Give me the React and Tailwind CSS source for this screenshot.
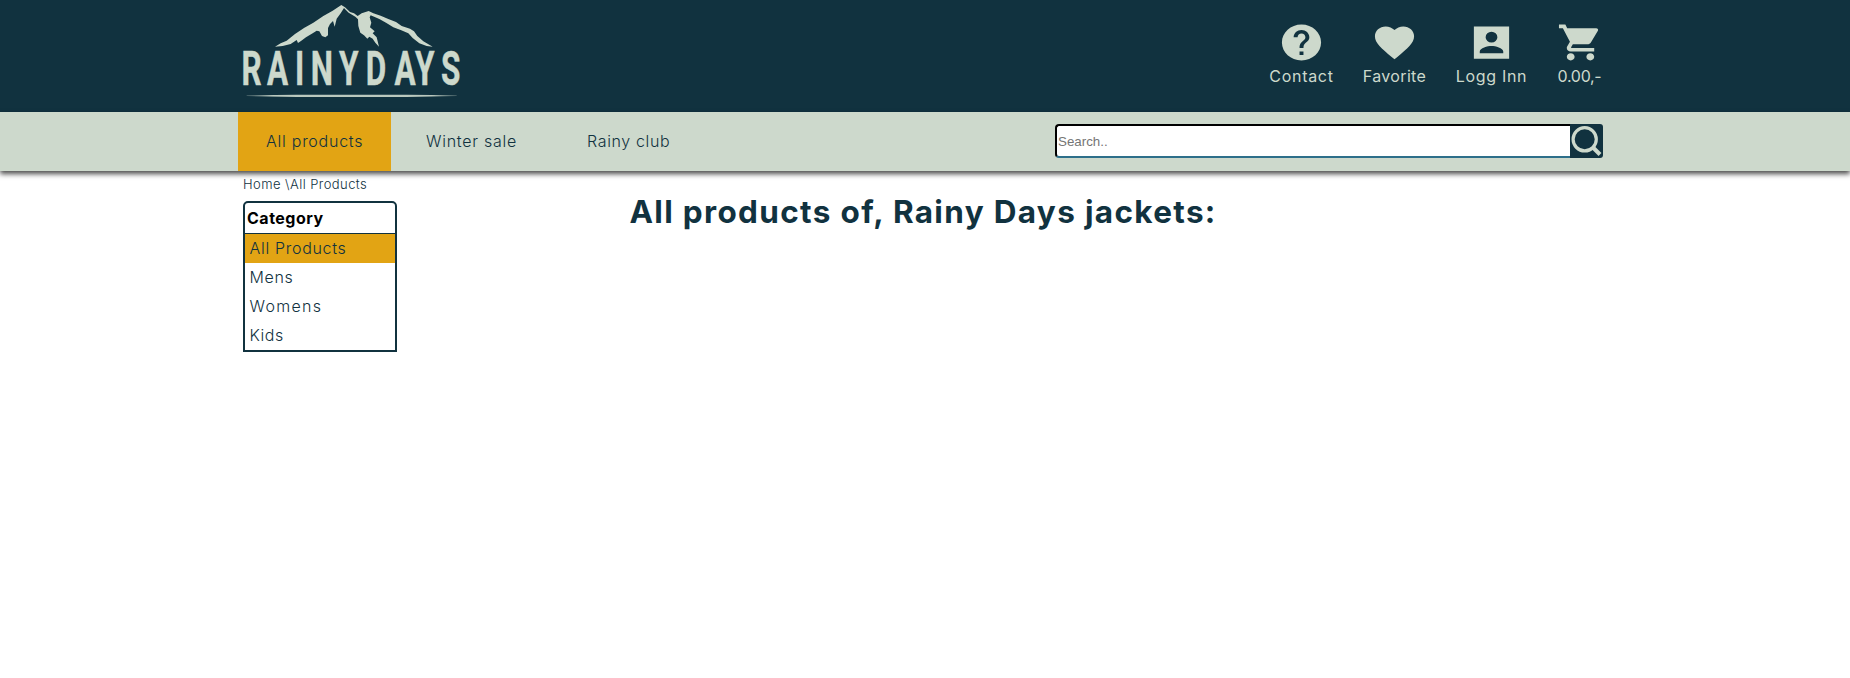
import { MdHelp, MdFavorite, MdShoppingCart } from 'react-icons/md';

function Logo() {
  return (
    <svg className="block h-[112px] w-[240px]" viewBox="0 0 720 336" fill="#cdd9cc">
      <defs>
        <linearGradient id="rule" x1="0" x2="1" y1="0" y2="0">
          <stop offset="0" stopColor="#cdd9cc" stopOpacity="0.3" />
          <stop offset="0.12" stopColor="#cdd9cc" stopOpacity="0.9" />
          <stop offset="0.88" stopColor="#cdd9cc" stopOpacity="0.9" />
          <stop offset="1" stopColor="#cdd9cc" stopOpacity="0.3" />
        </linearGradient>
      </defs>
      <path d="M135 140 L152 130 L170 122 L195 102 L222 84 L250 68 L280 48 L308 32 L334 15 L345 22 L360 36 L372 40 L383 48 L395 40 L416 33 L430 40 L452 47 L475 57 L498 66 L515 78 L540 86 L552 94 L562 108 L580 124 L608 140 L590 138 L568 130 L548 114 L535 100 L512 90 L490 82 L468 68 L448 57 L422 46 L419 52 L424 68 L420 82 L434 94 L428 100 L440 112 L447 140 L436 128 L428 116 L418 110 L412 116 L402 106 L391 98 L385 78 L384 58 L376 50 L356 38 L342 24 L332 40 L320 56 L314 80 L309 63 L300 72 L294 84 L294 106 L286 112 L276 108 L268 94 L260 92 L248 100 L228 112 L214 122 L204 129 L200 120 L182 132 L158 138 Z" />
      <path d="M478 65 L492 68 L505 86 L492 78 Z" />
      <text
        className="font-['Roboto'] font-bold"
        transform="scale(0.66 1)"
        fontSize="143"
        stroke="#cdd9cc"
        strokeWidth="1.5"
        textAnchor="middle"
        y="255.5"
        x="98.5 216 316 417.5 540 663 795.5 885.5 1003"
      >
        RAINYDAYS
      </text>
      <path d="M50 286 L200 284 H530 L680 286 V288 L530 291 H200 L50 288 Z" fill="url(#rule)" />
    </svg>
  );
}

function AccountBox(props) {
  return (
    <svg viewBox="0 0 24 24" fill="currentColor" fillRule="evenodd" {...props}>
      <path d="M3 3H21V21H3ZM15 9A3 3 0 1 0 9 9A3 3 0 1 0 15 9ZM6 17V18H18V17C18 15 14 13.9 12 13.9S6 15 6 17Z" />
    </svg>
  );
}

const actions = [
  { label: 'Contact', Icon: MdHelp, box: 'w-[64px] ml-[26px]', icon: '-ml-[1px]', text: 'tracking-[0.7px]' },
  { label: 'Favorite', Icon: MdFavorite, box: 'w-[64px] ml-[29px]', icon: '-ml-[1px]', text: 'tracking-[0.35px]' },
  { label: 'Logg Inn', Icon: AccountBox, box: 'w-[72px] ml-[29px]', icon: '-ml-[1px]', text: 'tracking-[0.7px]' },
  { label: '0.00,-', Icon: MdShoppingCart, box: 'w-[44px] ml-[30px]', icon: 'ml-[2px]', text: 'tracking-[-0.3px]' },
];

const categories = [
  { label: 'All Products', style: 'bg-[#e2a414] tracking-[0.7px]' },
  { label: 'Mens', style: 'tracking-[0.6px]' },
  { label: 'Womens', style: 'tracking-[1.3px]' },
  { label: 'Kids', style: 'tracking-[0.5px]' },
];

export default function App() {
  return (
    <div className="min-h-[678px] bg-white font-['Inter',sans-serif] text-[16px] text-[#11323f]">
      <header className="flex h-[112px] justify-between bg-[#11323f] pr-[248.5px] pl-[230px] text-[#cdd9cc]">
        <Logo />
        <div className="flex pt-[20.5px]">
          {actions.map(({ label, Icon, box, icon, text }) => (
            <a key={label} className={`flex flex-col items-center ${box}`}>
              <Icon className={`h-[43px] w-[47px] shrink-0 ${icon}`} preserveAspectRatio="none" />
              <span className={`mt-[2px] leading-5 whitespace-nowrap ${text}`}>{label}</span>
            </a>
          ))}
        </div>
      </header>

      <nav className="relative flex h-[59px] justify-between bg-[#cdd9cc] pr-[247px] pl-[238px] font-light shadow-[0_3px_5px_0_rgba(0,0,0,0.7)]">
        <div className="flex leading-[59px]">
          <a className="w-[153px] bg-[#e2a414] pl-[28px] tracking-[0.75px]">All products</a>
          <a className="w-[161px] pl-[35px] tracking-[0.75px]">Winter sale</a>
          <a className="w-[160px] pl-[35px] tracking-[0.65px]">Rainy club</a>
        </div>
        <form className="mt-3 flex h-[34px] w-[548px]">
          <input
            className="h-full w-[515px] rounded-l-[4px] border-2 border-r-0 border-black border-b-[#2d6f8a] bg-white px-[1px] font-['Liberation_Sans'] text-[13.33px] font-normal placeholder:text-[#757575]"
            placeholder="Search.."
          />
          <button className="h-full w-[33px] rounded-r-[3px] bg-[#11323f]" type="button">
            <svg className="block h-[34px] w-[33px]" viewBox="0 0 33 34" fill="none" stroke="#cdd9cc" strokeWidth="3.2">
              <circle cx="14.7" cy="15.3" r="11.6" />
              <path d="M23 23.5 L30 30.5" strokeWidth="4" />
            </svg>
          </button>
        </form>
      </nav>

      <div className="flex pl-[243px]">
        <aside className="w-[154px] pt-[5px] font-light">
          <p className="text-[13px] leading-4 tracking-[0.42px] whitespace-nowrap">Home \All Products</p>
          <div className="mt-[9px] rounded-t-[5px] border-2 border-[#11323f]">
            <h2 className="h-[31px] border-b border-[#11323f] pl-[2px] leading-[30px] font-bold tracking-[0.5px] text-black">
              Category
            </h2>
            <ul>
              {categories.map(({ label, style }) => (
                <li key={label} className={`h-[29px] pl-[4.5px] leading-[29px] ${style}`}>
                  {label}
                </li>
              ))}
            </ul>
          </div>
        </aside>
        <main className="pt-[23px] pl-[232.5px]">
          <h1 className="text-[31.5px] leading-9 font-bold tracking-[1.33px] whitespace-nowrap">
            All products of, Rainy Days jackets:
          </h1>
        </main>
      </div>
    </div>
  );
}
